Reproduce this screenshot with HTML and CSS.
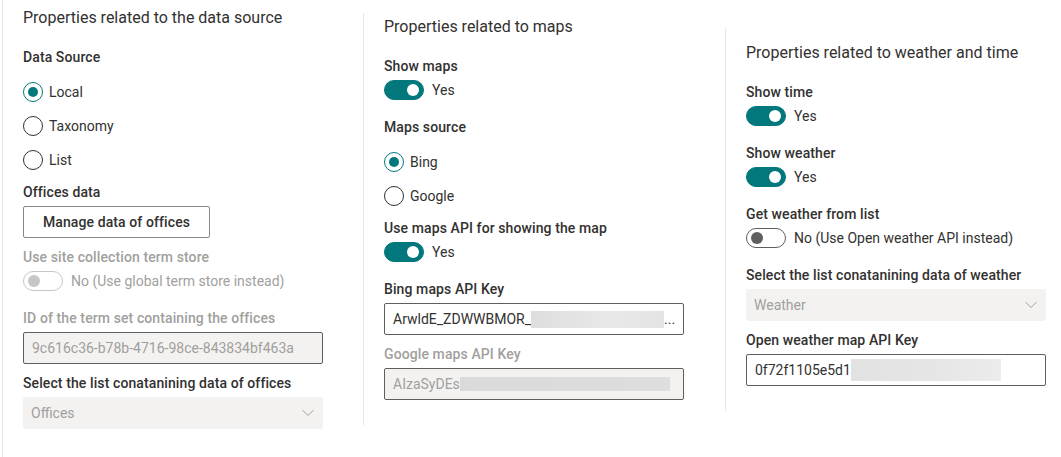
FILE: index.html
```html
<!DOCTYPE html>
<html lang="en">
<head>
<meta charset="utf-8">
<title>Property pane</title>
<link rel="stylesheet" href="styles.css">
</head>
<body>
<div class="page">
  <section class="col col-1">
    <h2 class="group-title">Properties related to the data source</h2>

    <div class="label">Data Source</div>
    <div class="radios after-radios">
      <div class="radio checked"><span class="circle"></span><span class="rtext">Local</span></div>
      <div class="radio"><span class="circle"></span><span class="rtext">Taxonomy</span></div>
      <div class="radio"><span class="circle"></span><span class="rtext">List</span></div>
    </div>

    <div class="label">Offices data</div>
    <button class="btn after-field" type="button">Manage data of offices</button>

    <div class="label disabled">Use site collection term store</div>
    <div class="toggle-row after-toggle disabled">
      <span class="toggle off"><span class="thumb"></span></span>
      <span class="ttext">No (Use global term store instead)</span>
    </div>

    <div class="label disabled">ID of the term set containing the offices</div>
    <div class="textfield is-disabled after-field"><span class="value">9c616c36-b78b-4716-98ce-843834bf463a</span></div>

    <div class="label">Select the list conatanining data of offices</div>
    <div class="dropdown is-disabled"><span class="value">Offices</span>
      <svg class="chev" width="12" height="8" viewBox="0 0 12 8"><path d="M0.5 1 L6 6.5 L11.5 1" fill="none" stroke="#a19f9d" stroke-width="1"/></svg>
    </div>
  </section>

  <section class="col col-2">
    <h2 class="group-title">Properties related to maps</h2>

    <div class="label">Show maps</div>
    <div class="toggle-row after-toggle">
      <span class="toggle on"><span class="thumb"></span></span>
      <span class="ttext">Yes</span>
    </div>

    <div class="label">Maps source</div>
    <div class="radios after-radios">
      <div class="radio checked"><span class="circle"></span><span class="rtext">Bing</span></div>
      <div class="radio"><span class="circle"></span><span class="rtext">Google</span></div>
    </div>

    <div class="label">Use maps API for showing the map</div>
    <div class="toggle-row after-toggle">
      <span class="toggle on"><span class="thumb"></span></span>
      <span class="ttext">Yes</span>
    </div>

    <div class="label">Bing maps API Key</div>
    <div class="textfield after-field"><span class="value">ArwldE_ZDWWBMOR_</span><span class="blur blur-bing"></span><span class="value">...</span></div>

    <div class="label disabled">Google maps API Key</div>
    <div class="textfield is-disabled"><span class="value">AIzaSyDEs</span><span class="blur blur-google"></span></div>
  </section>

  <section class="col col-3">
    <h2 class="group-title">Properties related to weather and time</h2>

    <div class="label">Show time</div>
    <div class="toggle-row after-toggle">
      <span class="toggle on"><span class="thumb"></span></span>
      <span class="ttext">Yes</span>
    </div>

    <div class="label">Show weather</div>
    <div class="toggle-row after-toggle">
      <span class="toggle on"><span class="thumb"></span></span>
      <span class="ttext">Yes</span>
    </div>

    <div class="label">Get weather from list</div>
    <div class="toggle-row after-toggle">
      <span class="toggle off"><span class="thumb"></span></span>
      <span class="ttext">No (Use Open weather API instead)</span>
    </div>

    <div class="label">Select the list conatanining data of weather</div>
    <div class="dropdown is-disabled after-field"><span class="value">Weather</span>
      <svg class="chev" width="12" height="8" viewBox="0 0 12 8"><path d="M0.5 1 L6 6.5 L11.5 1" fill="none" stroke="#a19f9d" stroke-width="1"/></svg>
    </div>

    <div class="label">Open weather map API Key</div>
    <div class="textfield"><span class="value">0f72f1105e5d1</span><span class="blur blur-weather"></span></div>
  </section>
</div>
</body>
</html>
```

FILE: styles.css
```css
* { box-sizing: border-box; }

html, body {
  margin: 0;
  padding: 0;
  background: #ffffff;
}

body {
  font-family: Roboto, "Open Sans", "Liberation Sans", sans-serif;
  font-size: 14px;
  color: #323130;
}

.page {
  display: flex;
  align-items: flex-start;
  padding-left: 2px;
  height: 457px;
}

.col {
  width: 361px;
  flex: none;
  border-left: 1px solid #e6e6e6;
  padding: 0 40px 25px 20px;
  display: flex;
  flex-direction: column;
  align-items: flex-start;
}

.col-1 { padding-top: 8px; padding-bottom: 26px; align-self: stretch; }
.col-2 { width: 362px; margin-top: 13px; padding-top: 4px; }
.col-3 { margin-top: 28px; padding-top: 15px; flex: 1; }

.group-title {
  margin: 0 0 19px 0;
  font-size: 16px;
  font-weight: 400;
  line-height: 20px;
  color: #323130;
  white-space: nowrap;
}

.label {
  font-weight: 500;
  line-height: 20px;
  margin-bottom: 4px;
  white-space: nowrap;
  letter-spacing: 0.1px;
}

.label.disabled { color: #a19f9d; }

.after-toggle { margin-bottom: 17px; }
.after-radios { margin-bottom: 12px; }
.after-field { margin-bottom: 9px; }

/* radios */
.radios {
  display: flex;
  flex-direction: column;
  gap: 14px;
  padding-top: 11px;
}

.radio {
  display: flex;
  align-items: center;
  height: 20px;
  gap: 6px;
}

.circle {
  width: 20px;
  height: 20px;
  border-radius: 50%;
  border: 1px solid #323130;
  background: #fff;
  position: relative;
  flex: none;
}

.radio.checked .circle { border-color: #03787c; }

.radio.checked .circle::after {
  content: "";
  position: absolute;
  left: 4px;
  top: 4px;
  width: 10px;
  height: 10px;
  border-radius: 50%;
  background: #03787c;
}

.rtext { line-height: 20px; }

/* button */
.btn {
  font-family: inherit;
  font-size: 14px;
  font-weight: 500;
  letter-spacing: 0.1px;
  color: #323130;
  background: #fff;
  border: 1px solid #8a8886;
  border-radius: 2px;
  height: 32px;
  width: 187px;
  padding: 0 16px;
}

/* toggles */
.toggle-row {
  display: flex;
  align-items: center;
  gap: 8px;
  height: 20px;
}

.toggle {
  width: 40px;
  height: 20px;
  border-radius: 10px;
  border: 1px solid #605e5c;
  display: flex;
  align-items: center;
  padding: 0 4px;
  flex: none;
}

.thumb {
  width: 12px;
  height: 12px;
  border-radius: 50%;
  background: #605e5c;
}

.toggle.on {
  background: #03787c;
  border-color: #03787c;
  justify-content: flex-end;
}

.toggle.on .thumb { background: #fff; }

.toggle-row.disabled .toggle { border-color: #c8c6c4; }
.toggle-row.disabled .thumb { background: #c8c6c4; }
.toggle-row.disabled .ttext { color: #a19f9d; }

.ttext { line-height: 20px; white-space: nowrap; }

/* text fields */
.textfield {
  width: 300px;
  height: 32px;
  border: 1px solid #605e5c;
  border-radius: 2px;
  background: #fff;
  display: flex;
  align-items: center;
  padding: 0 8px;
  white-space: nowrap;
  overflow: hidden;
}

.textfield.is-disabled {
  background: #f3f2f1;
  color: #a19f9d;
}

.blur {
  display: inline-block;
  flex: none;
}

.blur-bing {
  width: 133px;
  height: 17px;
  background: linear-gradient(90deg, #dedede, #e8e8e8 60%, #e4e4e4);
}

.blur-google {
  width: 210px;
  height: 14px;
  background: linear-gradient(90deg, #dadada, #dcdcdc 60%, #dedede);
}

.blur-weather {
  width: 150px;
  height: 22px;
  background: linear-gradient(90deg, #e2e2e2, #e6e6e6 60%, #ececec);
}

/* dropdown */
.dropdown {
  width: 300px;
  height: 32px;
  border-radius: 2px;
  display: flex;
  align-items: center;
  justify-content: space-between;
  padding: 0 9px 0 8px;
}

.dropdown.is-disabled {
  background: #f3f2f1;
  color: #a19f9d;
}

.chev { flex: none; }
```
